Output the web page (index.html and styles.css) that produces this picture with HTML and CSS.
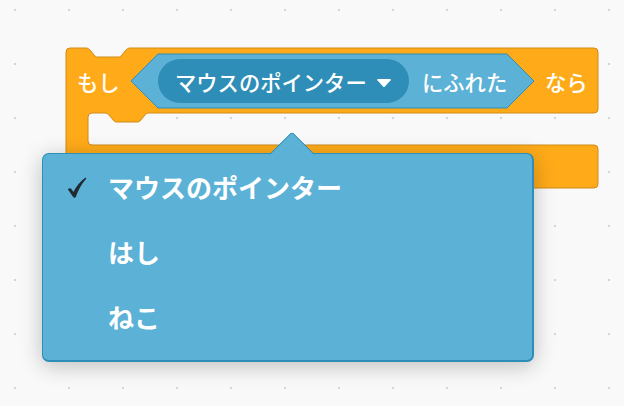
FILE: index.html
```html
<!DOCTYPE html>
<html lang="ja">
<head>
<meta charset="utf-8">
<link rel="stylesheet" href="styles.css">
</head>
<body>
<div class="workspace">
  <svg class="blocks" width="624" height="406" viewBox="0 0 624 406">
    <path class="c-block" d="M66,52 Q66,48 70,48 H86 C88,48 89,49 90,50 L95,56 C96,57 97,57 99,57 H117 C119,57 120,57 121,56 L126,50 C127,49 128,48 130,48 H594 Q598,48 598,52 V109 Q598,113 594,113 H149 C147,113 146,114 145,115 L140,121 C139,122 138,122 136,122 H118 C116,122 115,122 114,121 L109,115 C108,114 107,113 105,113 H92 Q88,113 88,117 V141 Q88,145 92,145 H594 Q598,145 598,149 V184 Q598,188 594,188 H70 Q66,188 66,184 Z"/>
    <text class="block-label" x="77" y="81">もし</text>
    <path class="sensing" d="M131,81 L158,54 H507 L534,81 L507,108 H158 Z"/>
    <rect class="menu-field" x="158" y="59" width="251" height="44" rx="22" ry="22"/>
    <text class="block-label" x="175" y="81">マウスのポインター</text>
    <path class="caret" d="M378,79 H390 Q391.5,79 390.6,80.2 L385,86.4 Q384,87.4 383,86.4 L377.4,80.2 Q376.5,79 378,79 Z"/>
    <text class="block-label" x="422" y="81">にふれた</text>
    <text class="block-label" x="545" y="81">なら</text>
  </svg>

  <div class="dropdown">
    <div class="dropdown-arrow"></div>
    <ul class="menu">
      <li class="menu-item">
        <svg class="check" width="20" height="22" viewBox="0 0 20 22">
          <path d="M0.8,12.2 Q2.6,10.4 4.2,11.8 L6.4,15 Q10.6,6.6 18.2,0.8 Q19.8,0.4 19,2 Q12.8,8.8 8.9,19.8 Q7.8,21.8 6.2,20 Z"/>
        </svg>
        <span class="item-text">マウスのポインター</span>
      </li>
      <li class="menu-item"><span class="item-text">はし</span></li>
      <li class="menu-item"><span class="item-text">ねこ</span></li>
    </ul>
  </div>
</div>
</body>
</html>
```

FILE: styles.css
```css
html, body {
  margin: 0;
  padding: 0;
}

body {
  width: 624px;
  height: 406px;
  overflow: hidden;
  background: #f9f9f9;
  font-family: "Noto Sans CJK JP", "Noto Sans", sans-serif;
}

.workspace {
  position: relative;
  width: 624px;
  height: 406px;
  background-color: #f9f9f9;
  background-image: radial-gradient(circle, #d6d6d6 0, #d6d6d6 1px, rgba(214,214,214,0) 1.6px);
  background-size: 54px 54px;
  background-position: -12px -17px;
}

.blocks {
  position: absolute;
  left: 0;
  top: 0;
  display: block;
}

.c-block {
  fill: #ffab19;
  stroke: #cf8b17;
  stroke-width: 1;
}

.sensing {
  fill: #5cb1d6;
  stroke: #2e8eb8;
  stroke-width: 1;
}

.menu-field {
  fill: #2e8eb8;
}

.caret {
  fill: #ffffff;
}

.block-label {
  fill: #ffffff;
  font-family: "Noto Sans CJK JP", sans-serif;
  font-size: 21.3px;
  font-weight: 500;
  dominant-baseline: central;
}

.dropdown {
  position: absolute;
  left: 42px;
  top: 153px;
  width: 489px;
  height: 206px;
  background: #5cb1d6;
  border: 1px solid #2e8eb8;
  border-bottom-width: 2px;
  border-right-width: 2px;
  border-radius: 7px;
  box-shadow: 0 4px 22px rgba(0, 0, 0, 0.24);
}

.dropdown-arrow {
  position: absolute;
  left: 233px;
  top: -16px;
  width: 32px;
  height: 32px;
  background: #5cb1d6;
  border-top: 1px solid #2e8eb8;
  border-left: 1px solid #2e8eb8;
  border-top-left-radius: 4px;
  box-sizing: border-box;
  transform: rotate(45deg);
}

.menu {
  position: relative;
  list-style: none;
  margin: 0;
  padding: 0;
}

.menu-item {
  display: flex;
  align-items: center;
  height: 65px;
  padding-left: 65px;
  position: relative;
}

.check {
  position: absolute;
  left: 24px;
  top: 23px;
}

.check path {
  fill: #1f2a33;
}

.item-text {
  color: #ffffff;
  font-size: 26px;
  font-weight: 700;
  line-height: 1;
}
```
